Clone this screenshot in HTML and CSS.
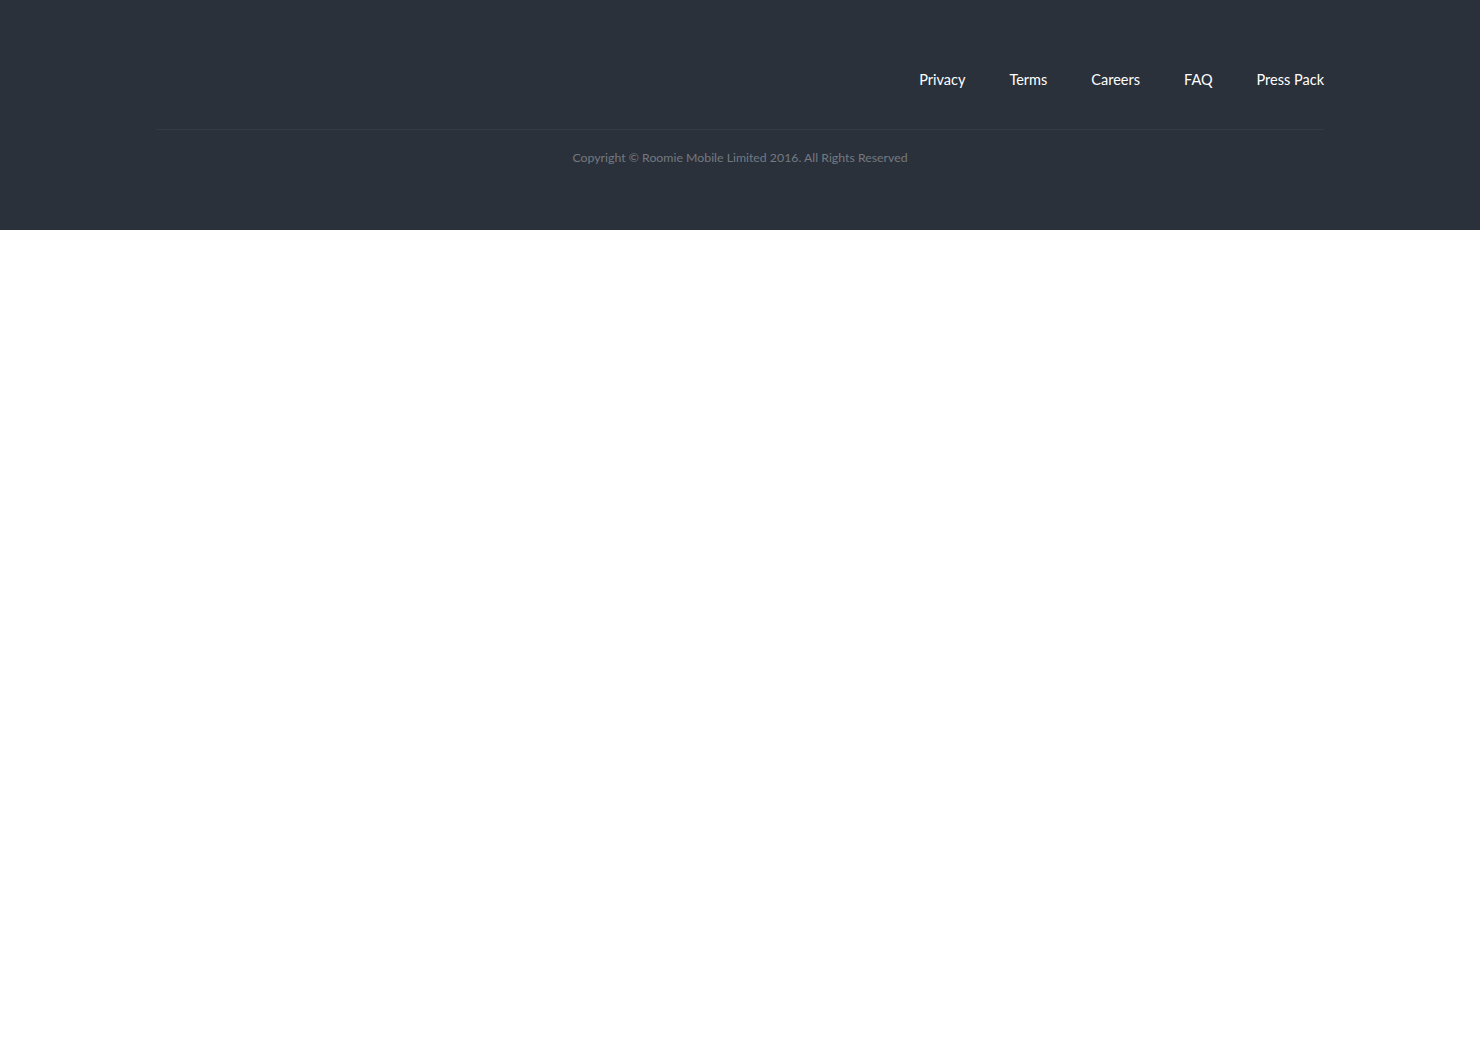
FILE: index.html
```html
<!DOCTYPE html>
<html lang="en">
<head>
<meta charset="utf-8">
<title>Roomie</title>
<link rel="stylesheet" href="styles.css">
</head>
<body>
<footer class="site-footer">
  <div class="footer-inner">
    <nav class="footer-nav">
      <a href="#">Privacy</a>
      <a href="#">Terms</a>
      <a href="#">Careers</a>
      <a href="#">FAQ</a>
      <a href="#">Press Pack</a>
    </nav>
    <p class="copyright">Copyright © Roomie Mobile Limited 2016. All Rights Reserved</p>
  </div>
</footer>
</body>
</html>
```
FILE: styles.css
```css
html, body {
  margin: 0;
  padding: 0;
  background: #ffffff;
}

body {
  font-family: "Lato", "Noto Sans", sans-serif;
}

.site-footer {
  background: #2b313b;
  height: 230px;
}

.footer-inner {
  width: 1168px;
  margin: 0 auto;
  padding-top: 71px;
}

.footer-nav {
  display: flex;
  justify-content: flex-end;
  gap: 44px;
  padding-bottom: 40px;
  border-bottom: 1px solid #353b45;
}

.footer-nav a {
  color: #ffffff;
  text-decoration: none;
  font-size: 14.5px;
  line-height: 18px;
}

.copyright {
  margin: 20px 0 0;
  text-align: center;
  color: #737981;
  font-size: 12.3px;
  line-height: 16px;
}
```
